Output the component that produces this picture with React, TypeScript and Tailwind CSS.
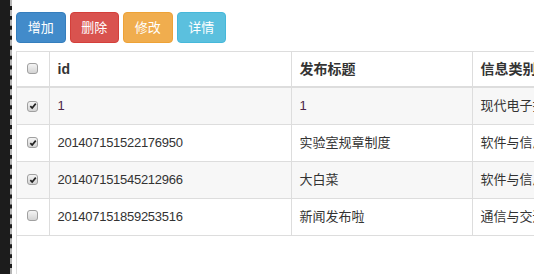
import React from "react";

type Row = { id: string; title: string; kind: string; checked: boolean; tint?: boolean };

const rows: Row[] = [
  { id: "1", title: "1", kind: "现代电子技术", checked: true, tint: true },
  { id: "201407151522176950", title: "实验室规章制度", kind: "软件与信息", checked: true },
  { id: "201407151545212966", title: "大白菜", kind: "软件与信息", checked: true },
  { id: "201407151859253516", title: "新闻发布啦", kind: "通信与交通", checked: false },
];

const Check = ({ checked }: { checked: boolean }) => (
  <span className="mt-[4px] inline-flex h-[11px] w-[11px] items-center justify-center rounded-[3px] border border-[#a0a0a0] bg-gradient-to-b from-[#f4f4f4] to-[#d4d4d4]">
    {checked && (
      <svg width="8" height="8" viewBox="0 0 9 9">
        <path d="M1.5 4.6 L3.6 6.8 L7.6 1.8" fill="none" stroke="#222" strokeWidth="1.9" />
      </svg>
    )}
  </span>
);

const App = () => {
  const btn = "flex h-[31px] w-[49.5px] items-center justify-center rounded-[4px] border text-[13px] text-white";

  return (
    <div
      className="flex h-[274px] w-[534px] overflow-hidden bg-white text-[13px] text-[#333]"
      style={{ fontFamily: '"Liberation Sans", "Noto Sans CJK SC", sans-serif' }}
    >
      <div className="w-[12px] shrink-0 border-r-2 border-dashed border-[#b5b5b5] bg-[#1c1c1c]" />
      <div className="min-w-0 flex-1 pl-[4px] pt-[12px]">
        <div className="flex gap-[4px]">
          <button type="button" className={`${btn} border-[#357ebd] bg-[#428bca]`}>增加</button>
          <button type="button" className={`${btn} border-[#d43f3a] bg-[#d9534f]`}>删除</button>
          <button type="button" className={`${btn} border-[#eea236] bg-[#f0ad4e]`}>修改</button>
          <button type="button" className={`${btn} border-[#46b8da] bg-[#5bc0de]`}>详情</button>
        </div>
        <div className="mt-[8px] h-[240px] w-[700px] border-l border-t border-[#dddddd]">
          <table className="border-collapse">
            <thead>
              <tr className="h-[35px] border-b-2 border-[#dddddd]">
                <th className="w-[32px] p-0 text-center align-middle">
                  <Check checked={false} />
                </th>
                <th className="w-[242px] border-l border-[#dddddd] pl-[8px] text-left text-[14px] font-bold">id</th>
                <th className="w-[181px] border-l border-[#dddddd] pl-[8px] text-left text-[14px] font-bold">发布标题</th>
                <th className="w-[200px] border-l border-[#dddddd] pl-[8px] text-left text-[14px] font-bold">信息类别</th>
              </tr>
            </thead>
            <tbody>
              {rows.map((r, i) => (
                <tr
                  key={r.id}
                  className={`h-[37px] border-b border-[#dddddd] ${i % 2 === 0 ? "bg-[#f7f7f7]" : "bg-white"}`}
                >
                  <td className="p-0 text-center align-middle">
                    <Check checked={r.checked} />
                  </td>
                  <td className={`border-l border-[#dddddd] pl-[8px] tracking-[-0.28px] ${r.tint ? "text-[#4c2448]" : ""}`}>
                    {r.id}
                  </td>
                  <td className={`border-l border-[#dddddd] pl-[8px] ${r.tint ? "text-[#4c2448]" : ""}`}>{r.title}</td>
                  <td className="border-l border-[#dddddd] pl-[8px]">{r.kind}</td>
                </tr>
              ))}
            </tbody>
          </table>
        </div>
      </div>
    </div>
  );
};

export default App;
